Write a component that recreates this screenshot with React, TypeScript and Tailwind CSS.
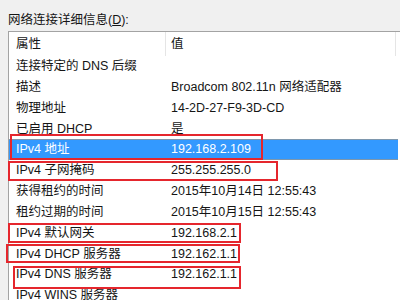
import React from "react";

const rows: [string, string][] = [
  ["连接特定的 DNS 后缀", ""],
  ["描述", "Broadcom 802.11n 网络适配器"],
  ["物理地址", "14-2D-27-F9-3D-CD"],
  ["已启用 DHCP", "是"],
  ["IPv4 地址", "192.168.2.109"],
  ["IPv4 子网掩码", "255.255.255.0"],
  ["获得租约的时间", "2015年10月14日 12:55:43"],
  ["租约过期的时间", "2015年10月15日 12:55:43"],
  ["IPv4 默认网关", "192.168.2.1"],
  ["IPv4 DHCP 服务器", "192.162.1.1."],
  ["IPv4 DNS 服务器", "192.162.1.1"],
  ["IPv4 WINS 服务器", ""],
];

const boxes = [
  { l: 10, t: 134, w: 253, h: 26 },
  { l: 8, t: 161, w: 270, h: 20 },
  { l: 8, t: 223, w: 233, h: 20 },
  { l: 6, t: 244, w: 234, h: 19 },
  { l: 13, t: 266, w: 228, h: 23 },
];

export default function App() {
  return (
    <div
      className="relative w-[400px] h-[300px] overflow-hidden bg-[#f0f0f0] text-[12.5px] text-[#151515]"
      style={{ fontFamily: '"Liberation Sans", "Noto Sans CJK SC", sans-serif' }}
    >
      <div className="h-[31px] pl-[8px] pt-[12px] leading-[16px]">
        网络连接详细信息(<span className="underline">D</span>):
      </div>
      <div className="ml-[8px] w-[400px] h-[300px] border-l border-t border-[#a3a3a3] bg-white">
        <div className="flex h-[24px] items-center">
          <div className="w-[157px] h-full flex items-center pl-[7px] border-r border-[#e5e5e5]">属性</div>
          <div className="w-[230px] h-full flex items-center pl-[5px] border-r border-[#e5e5e5]">值</div>
        </div>
        {rows.map(([k, v], i) => {
          const sel = i === 4;
          return (
            <div
              key={i}
              className={
                sel
                  ? "flex h-[20.85px] w-[389px] items-center bg-[#3399ff] text-white border-y border-[#7e97ad]"
                  : "flex h-[20.85px] w-[389px] items-center"
              }
            >
              <div className="w-[157px] pl-[7px] whitespace-nowrap">{k}</div>
              <div className="pl-[5px] whitespace-nowrap">{v}</div>
            </div>
          );
        })}
      </div>
      {boxes.map((b, i) => (
        <div
          key={i}
          className="absolute border-2 border-[#e5262d]"
          style={{ left: b.l, top: b.t, width: b.w, height: b.h }}
        />
      ))}
    </div>
  );
}
